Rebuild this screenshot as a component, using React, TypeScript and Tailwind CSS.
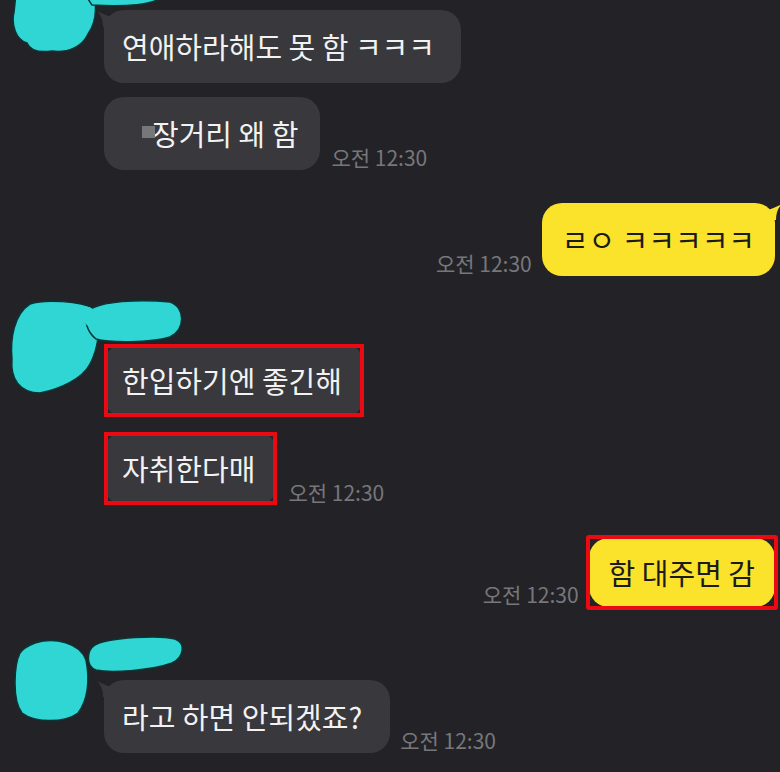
import React from "react";

const FONT = { fontFamily: '"Noto Sans CJK KR", "Noto Sans", sans-serif' };

function Time() {
  return (
    <span className="text-[21px] leading-none text-[#77777b] whitespace-nowrap mb-[2px]">
      오전 12:30
    </span>
  );
}

function InTail() {
  return (
    <svg className="absolute -left-[7px] top-[1px]" width="14" height="16" viewBox="0 0 14 16">
      <path d="M14 6 C8 4 4 2 0 0 C4 4 6 9 6 16 L14 16 Z" fill="#39393d" />
    </svg>
  );
}

function OutTail() {
  return (
    <svg className="absolute -right-[7px] top-[1px]" width="14" height="16" viewBox="0 0 14 16">
      <path d="M0 6 C6 4 10 2 14 0 C10 4 8 9 8 16 L0 16 Z" fill="#fbe22b" />
    </svg>
  );
}

function RedBox({ inset = "inset-0" }: { inset?: string }) {
  return <div className={`absolute ${inset} border-[4px] border-[#ec0a12] pointer-events-none`} />;
}

function Bubble({
  text,
  tail,
  boxed,
  className = "pl-[18px] pr-[22px]",
}: {
  text: React.ReactNode;
  tail?: boolean;
  boxed?: boolean;
  className?: string;
}) {
  return (
    <div
      className={`relative bg-[#39393d] text-[#f2f2f2] text-[29px] leading-[37px] rounded-[20px] py-[18px] whitespace-nowrap ${className}`}
    >
      {tail && <InTail />}
      {text}
      {boxed && <RedBox />}
    </div>
  );
}

function Yellow({
  text,
  tail,
  boxed,
  className = "py-[18px]",
}: {
  text: string;
  tail?: boolean;
  boxed?: boolean;
  className?: string;
}) {
  return (
    <div
      className={`relative bg-[#fbe22b] text-[#1b1b1b] text-[29px] leading-[37px] rounded-[20px] px-[20px] whitespace-nowrap ${className}`}
    >
      {tail && <OutTail />}
      {text}
      {boxed && <RedBox inset="-inset-[3px] rounded-[3px]" />}
    </div>
  );
}

export default function App() {
  return (
    <div className="w-full h-[772px] bg-[#232327] overflow-hidden relative flex flex-col" style={FONT}>
      {/* group 1 */}
      <div className="relative pl-[104px] pt-[10px] flex flex-col gap-[14px]">
        <svg className="absolute left-0 top-0" width="190" height="60" viewBox="0 0 190 60">
          <path
            d="M16 -4 L94 -4 C97 10 95 24 88 34 C82 47 68 53 52 51 C38 53 30 50 27 43 C16 40 11 25 14 12 C15 5 15 0 16 -4 Z"
            fill="#2fd6d3"
            stroke="#0b3535"
            strokeWidth="1.5"
          />
          <path d="M86 -4 L162 -4 C156 5 124 7 92 5 Z" fill="#2fd6d3" stroke="#0b3535" strokeWidth="1.5" />
        </svg>
        <div className="flex">
          <Bubble text="연애하라해도 못 함 ㅋㅋㅋ" tail className="pl-[18px] pr-[26px]" />
        </div>
        <div className="flex items-end gap-[11px]">
          <Bubble
            className="pl-[48px] pr-[22px]"
            text={
              <span className="relative">
                <span className="absolute -left-[10px] top-[14px] w-[13px] h-[12px] bg-[#77777a]" />
                장거리 왜 함
              </span>
            }
          />
          <Time />
        </div>
      </div>

      {/* me */}
      <div className="flex justify-end items-end gap-[10px] pr-[5px] mt-[33px]">
        <Time />
        <Yellow text="ㄹㅇ ㅋㅋㅋㅋㅋ" tail />
      </div>

      {/* group 2 */}
      <div className="relative pl-[104px] pt-[45px] mt-[23px] flex flex-col gap-[15px]">
        <svg className="absolute left-0 top-0" width="190" height="100" viewBox="0 0 190 100">
          <path
            d="M30 5 C45 0 80 2 95 10 C102 25 98 50 90 65 C82 80 60 90 40 94 C20 94 10 80 12 60 C10 40 14 15 30 5 Z"
            fill="#2fd6d3"
            stroke="#0b3535"
            strokeWidth="1.5"
          />
          <path
            d="M88 12 C100 2 140 0 170 3 C185 8 186 30 170 38 C150 44 110 44 96 40 C86 32 84 20 88 12 Z"
            fill="#2fd6d3"
            stroke="#0b3535"
            strokeWidth="1.5"
          />
          <path d="M80 8 C90 6 96 10 98 20 C94 30 88 30 84 22 Z" fill="#2fd6d3" />
        </svg>
        <div className="flex">
          <Bubble text="한입하기엔 좋긴해" boxed />
        </div>
        <div className="flex items-end gap-[11px]">
          <Bubble text="자취한다매" boxed />
          <Time />
        </div>
      </div>

      {/* me */}
      <div className="flex justify-end items-end gap-[10px] pr-[5px] mt-[33px]">
        <Time />
        <Yellow text="함 대주면 감" boxed className="py-[16px]" />
      </div>

      {/* group 3 */}
      <div className="relative pl-[104px] pt-[45px] mt-[28px] flex flex-col">
        <svg className="absolute left-0 top-0" width="190" height="100" viewBox="0 0 190 100">
          <path
            d="M35 8 C55 2 80 8 86 25 C90 45 88 65 78 78 C65 88 35 88 22 78 C12 65 14 30 20 18 C24 12 30 10 35 8 Z"
            fill="#2fd6d3"
            stroke="#0b3535"
            strokeWidth="1.5"
          />
          <path
            d="M95 10 C110 2 160 0 175 4 C186 8 184 22 172 28 C150 36 110 38 96 35 C86 32 86 16 95 10 Z"
            fill="#2fd6d3"
            stroke="#0b3535"
            strokeWidth="1.5"
          />
        </svg>
        <div className="flex items-end gap-[10px]">
          <Bubble text="라고 하면 안되겠죠?" tail className="pl-[18px] pr-[28px]" />
          <Time />
        </div>
      </div>
    </div>
  );
}
